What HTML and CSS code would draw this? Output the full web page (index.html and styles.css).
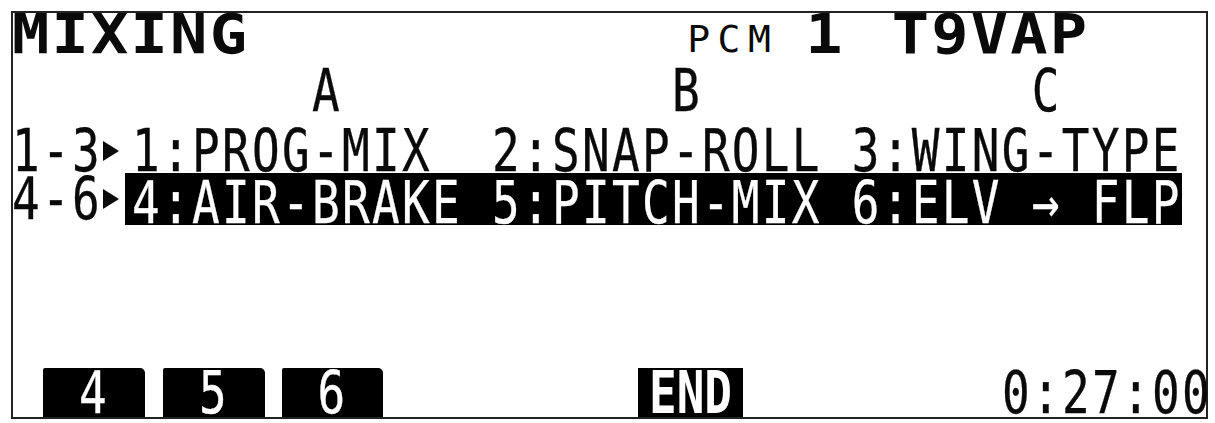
FILE: index.html
```html
<!DOCTYPE html>
<html lang="en">
<head>
<meta charset="utf-8">
<title>MIXING</title>
<link rel="stylesheet" href="styles.css">
</head>
<body>
<div class="screen">
  <div class="header">
    <span class="big title">MIXING</span>
    <span class="pcm">PCM</span>
    <span class="big num">1</span>
    <span class="big model">T9VAP</span>
  </div>
  <div class="row letters"><span class="t">          A           B           C</span></div>
  <div class="row row1"><span class="t">1-3</span><span class="tri-cell"><i class="tri"></i></span><span class="t">1:PROG-MIX  2:SNAP-ROLL 3:WING-TYPE</span></div>
  <div class="row row2"><span class="t">4-6</span><span class="tri-cell narrow"><i class="tri"></i></span><span class="band"><span class="t">4:AIR-BRAKE 5:PITCH-MIX 6:ELV → FLP</span></span></div>
  <div class="spacer"></div>
  <div class="footer">
    <span class="tab tab1"><span class="t">4</span></span>
    <span class="tab tab2"><span class="t">5</span></span>
    <span class="tab tab3"><span class="t">6</span></span>
    <span class="tab end"><span class="t">END</span></span>
    <span class="time"><span class="t">0:27:00</span></span>
  </div>
</div>
</body>
</html>
```
FILE: styles.css
```css
body {
  margin: 0;
  background: #ffffff;
}

.screen {
  margin: 11px 0 0 11px;
  width: 1197px;
  height: 408px;
  border: 2px solid #222222;
  box-sizing: border-box;
  display: flex;
  flex-direction: column;
  font-family: "DejaVu Sans Mono", monospace;
  color: #0a0a0a;
}

.header {
  display: flex;
  align-items: flex-start;
  height: 42px;
  white-space: pre;
}

.big {
  display: inline-block;
  font-weight: bold;
  font-size: 62px;
  line-height: 42px;
  height: 42px;
  transform: scaleY(0.9);
}

.title {
  letter-spacing: 2.2px;
  margin-left: -1px;
}

.pcm {
  display: inline-block;
  font-size: 38px;
  line-height: 42px;
  height: 42px;
  letter-spacing: 7.5px;
  margin-top: 5px;
  margin-left: 438px;
}

.num {
  margin-left: 27px;
}

.model {
  letter-spacing: 2.2px;
  margin-left: 49px;
}

.t {
  display: inline-block;
  white-space: pre;
  font-size: 46px;
  letter-spacing: 2.3px;
  line-height: 44px;
  height: 44px;
  transform: scaleY(1.28);
  -webkit-text-stroke: 0.25px currentColor;
}

.row {
  display: flex;
  align-items: flex-start;
  margin-left: -1px;
  box-sizing: border-box;
}

.letters {
  height: 70px;
  padding-top: 14px;
}

.row1 {
  height: 48px;
  padding-top: 4px;
}

.row2 {
  height: 52px;
  align-items: center;
}

.tri-cell {
  width: 30px;
  height: 44px;
  display: flex;
  align-items: center;
  flex-shrink: 0;
}

.tri-cell.narrow {
  width: 23px;
}

.tri {
  display: block;
  width: 0;
  height: 0;
  flex-shrink: 0;
  border-left: 16px solid #0a0a0a;
  border-top: 10px solid transparent;
  border-bottom: 10px solid transparent;
  margin-left: 1px;
}

.band {
  background: #000000;
  color: #ffffff;
  height: 52px;
  width: 1057px;
  flex-shrink: 0;
  padding: 8px 0 0 7px;
  box-sizing: border-box;
}

.spacer {
  flex: 1;
}

.footer {
  display: flex;
  align-items: flex-end;
  height: 49px;
}

.tab {
  background: #000000;
  color: #ffffff;
  height: 49px;
  width: 102px;
  display: flex;
  justify-content: center;
  align-items: center;
  border-radius: 2px 5px 0 0;
}

.tab .t {
  line-height: 38px;
  height: 38px;
}

.tab1 {
  margin-left: 30px;
}

.tab2 {
  margin-left: 18px;
}

.tab3 {
  margin-left: 17px;
  width: 101px;
}

.end {
  margin-left: 255px;
  width: 105px;
  border-radius: 0;
}

.end .t {
  font-weight: bold;
  letter-spacing: 0;
  -webkit-text-stroke: 0;
}

.time {
  margin-left: auto;
  margin-right: -6px;
  margin-bottom: 2px;
}
```
